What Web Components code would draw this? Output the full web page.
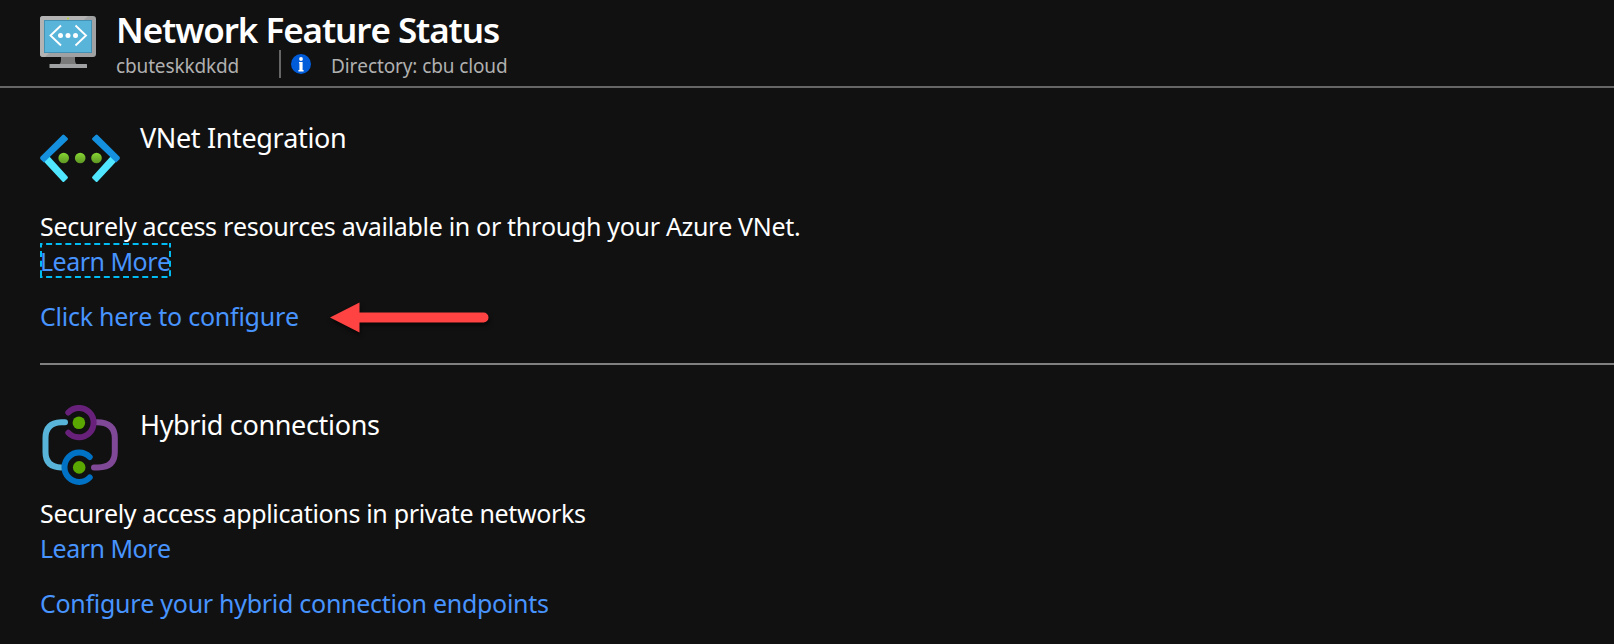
<!DOCTYPE html>
<html lang="en"><head><meta charset="utf-8"><title>Network Feature Status</title>
<style>
html,body{margin:0;height:100%;background:#111;overflow:hidden}
body{font-family:"Noto Sans","Open Sans",sans-serif;color:#fff}
</style></head><body>
<network-page></network-page>
<script>
const make=(name,html,extra)=>customElements.define(name,class extends HTMLElement{
  constructor(){super();this.attachShadow({mode:'open'}).innerHTML=html;}
  connectedCallback(){if(extra)extra(this);}
});

/* Text run whose tracking is adjusted so that its ink spans data-ink pixels. */
make('fit-text','<style>:host{display:block;white-space:nowrap;font-kerning:none;font-variant-ligatures:none}</style><slot></slot>',el=>{
  const c=document.createElement('canvas').getContext('2d'),s=getComputedStyle(el);
  c.font=`${s.fontWeight} ${s.fontSize} ${s.fontFamily}`;c.fontKerning='none';
  const t=el.textContent,m=c.measureText(t);
  el.style.letterSpacing=((+el.dataset.ink-(m.actualBoundingBoxRight+m.actualBoundingBoxLeft))/(t.length-1)).toFixed(3)+'px';
});

make('monitor-icon',`<style>:host{display:block;width:56px;height:52px}svg{display:block}</style>
<svg width="56" height="52" viewBox="0 0 56 52">
<path d="M21 40h14v4q0 4 3 5H18q3-1 3-5z" fill="#7a7a7a"/>
<rect x="9.5" y="48" width="37.5" height="4" rx=".5" fill="#a0a1a2"/>
<rect width="56" height="41" rx="3" fill="#a0a1a2"/>
<path d="M3 0h45L5 41H3q-3 0-3-3V3q0-3 3-3z" fill="#b3b3b3"/>
<rect x="4" y="4" width="48" height="33" fill="#4591b3"/><rect x="5" y="5" width="46" height="31" fill="#59b4d9"/>
<circle cx="28" cy="2.6" r="1" fill="#b8d432"/>
<path d="M21 9.5 10.5 19.5 21 29.5M35.500 9.500 46 19.500 35.500 29.500" fill="none" stroke="#fff" stroke-width="1.9"/>
<g fill="#fff"><circle cx="20.500" cy="19.500" r="2.500"/><circle cx="28" cy="19.500" r="2.500"/><circle cx="35.500" cy="19.500" r="2.500"/></g>
</svg>`);

make('info-icon',`<style>:host{display:block;width:20px;height:20px}svg{display:block}</style>
<svg width="20" height="20" viewBox="0 0 20 20"><circle cx="10" cy="10" r="10" fill="#015cda"/><circle cx="10" cy="5" r="1.900" fill="#fff"/><path d="M8 8h3.600v8h1v1.500H7.400V16h1V9.300H8z" fill="#fff"/></svg>`);

make('vnet-icon',`<style>:host{display:block;width:80px;height:80px}svg{display:block}</style>
<svg width="80" height="80" viewBox="0 0 80 80">
<defs><linearGradient id="g" x2="0" y2="1"><stop stop-color="#86d633"/><stop offset="1" stop-color="#5e9624"/></linearGradient></defs>
<g fill="#50e6ff"><path d="M3.800 42.200 8.500 37.500 27.500 58.400q1 1 0 2L24.400 63.500q-1 1-2 0L3.800 43.500z"/><path d="M76.200 42.200 71.500 37.500 52.500 58.400q-1 1 0 2L55.600 63.500q1 1 2 0L76.200 43.500z"/></g>
<g fill="#1490df"><path d="M22.400 17 .7 38.600q-1.200 1.400 0 2.800L3.900 44.400 27.500 22q1-1 0-2L24.400 17q-1-1-2 0z"/><path d="M57.600 17 79.300 38.600q1.200 1.400 0 2.800L76.100 44.400 52.500 22q-1-1 0-2L55.600 17q1-1 2 0z"/></g>
<g fill="url(#g)"><circle cx="23.700" cy="40" r="5.300"/><circle cx="40.200" cy="40" r="5.300"/><circle cx="56.500" cy="40" r="5.300"/></g>
</svg>`);

make('hybrid-icon',`<style>:host{display:block;width:80px;height:80px}svg{display:block}</style>
<svg width="80" height="80" viewBox="0 0 80 80" fill="none" stroke-linecap="round" stroke-width="6">
<path d="M25 17.300H21Q5.500 18 5.500 33V47Q5.500 62 21 62.400" stroke="#59b4d9"/>
<path d="M57 17.300Q74.800 17.500 74.800 33V47Q74.800 62.400 58 62.400H54" stroke="#804998"/>
<path d="M28.300 7.500A14.700 14.700 0 1 1 28.300 27.800" stroke="#68217a"/>
<path d="M49.700 52A14.700 14.700 0 1 0 49.700 72.500" stroke="#0072c6"/>
<circle cx="38.900" cy="17.800" r="6.300" fill="#59a700"/><circle cx="39.200" cy="62.400" r="6.300" fill="#59a700"/>
</svg>`);

make('pointer-arrow',`<style>:host{display:block;width:170px;height:44px}svg{display:block;overflow:visible;filter:drop-shadow(1px 3px 2px rgba(0,0,0,.6))}</style>
<svg width="170" height="44"><path d="M0 22.500 29.500 7.500v10H153.500a5 5 0 0 1 0 10H29.500v10z" fill="#ff4343"/></svg>`);

make('page-header',`<style>
:host{display:flex;box-sizing:border-box;height:88px;border-bottom:2px solid #666;padding:16px 0 0 40px;gap:20px}
.text{margin-top:-10px}
.title{font-size:35px;font-weight:600;line-height:48px;margin-left:0}
.sub{display:flex;align-items:center;height:28px;margin-top:-4px;color:#b0b0b0;font-size:19px;line-height:26px}
.sub fit-text{padding-top:4px}
.name{width:163px}.bar{width:2px;height:28px;background:#666;margin-right:10px}
.dir{margin-left:20px}
</style><monitor-icon></monitor-icon><div class="text"><fit-text class="title" data-ink="380">Network Feature Status</fit-text>
<div class="sub"><fit-text class="name" data-ink="121.500">cbuteskkdkdd</fit-text><div class="bar"></div><info-icon></info-icon><fit-text class="dir" data-ink="175">Directory: cbu cloud</fit-text></div></div>`);

make('feature-section',`<style>
:host{display:block;padding:30px 0 29px 40px;font-size:25px;line-height:35px}
.head{display:flex;gap:20px;height:80px;margin-bottom:11px}
.body{display:flex;flex-direction:column;align-items:flex-start}
::slotted([slot=title]){font-size:27px;line-height:36px;margin-top:2px}
.action{display:flex;align-items:center;gap:31px;height:35px;margin-top:20px}
</style><div class="head"><slot name="icon"></slot><slot name="title"></slot></div><div class="body"><slot></slot></div><div class="action"><slot name="action"></slot></div>`);

make('text-link',`<style>:host{display:block;position:relative;color:#4894fe}
svg{display:none;position:absolute;left:0;top:-1px}:host([focused]) svg{display:block}</style><slot></slot>
<svg width="131" height="35" fill="none" stroke="#00bcf2" stroke-width="2" stroke-dasharray="6 3.615"><path d="M0 1H131M0 34H131" stroke-dashoffset="3.500"/><path d="M1 0V35M130 0V35" stroke-dashoffset="1.500"/></svg>`);

make('network-page',`<style>:host{display:block;height:644px}
.rule{height:2px;background:#808080;margin-left:40px}.second{padding-top:40px;padding-bottom:0}</style>
<page-header></page-header>
<feature-section><vnet-icon slot="icon"></vnet-icon><fit-text slot="title" data-ink="205">VNet Integration</fit-text>
<fit-text data-ink="758">Securely access resources available in or through your Azure VNet.</fit-text>
<text-link focused><fit-text data-ink="128">Learn More</fit-text></text-link>
<text-link slot="action"><fit-text data-ink="257">Click here to configure</fit-text></text-link><pointer-arrow slot="action"></pointer-arrow></feature-section>
<div class="rule"></div>
<feature-section class="second"><hybrid-icon slot="icon"></hybrid-icon><fit-text slot="title" data-ink="237">Hybrid connections</fit-text>
<fit-text data-ink="544">Securely access applications in private networks</fit-text>
<text-link><fit-text data-ink="128">Learn More</fit-text></text-link>
<text-link slot="action"><fit-text data-ink="507">Configure your hybrid connection endpoints</fit-text></text-link></feature-section>`);
</script></body></html>
